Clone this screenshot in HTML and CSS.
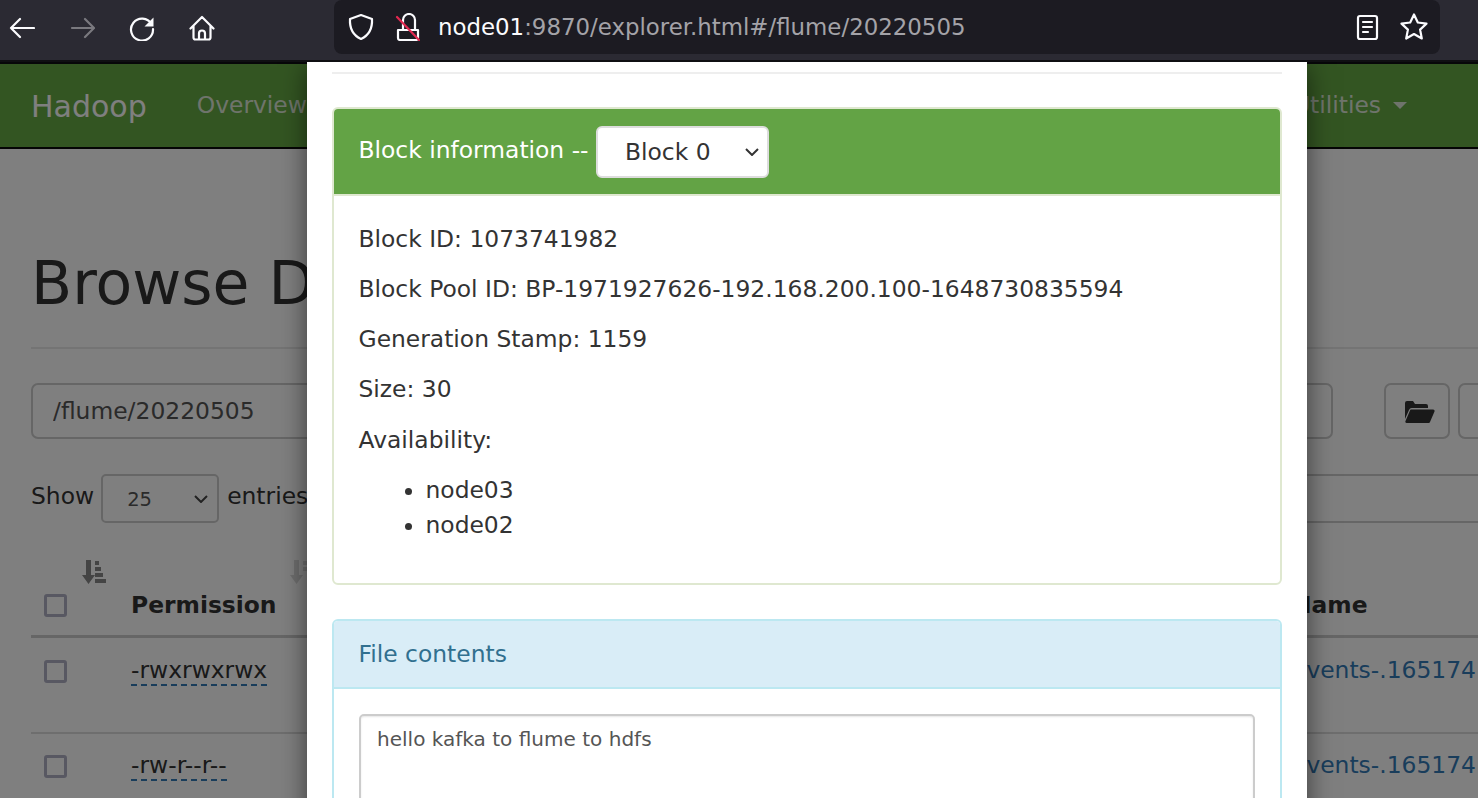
FILE: index.html
```html
<!DOCTYPE html>
<html lang="en">
<head>
<meta charset="utf-8">
<title>Browsing HDFS</title>
<link rel="stylesheet" href="styles.css">
</head>
<body>
<header class="toolbar">
  <div class="tool-buttons">
    <svg class="tool-icon" viewBox="0 0 26 26"><path d="M25 13H2M11 4l-9 9 9 9"/></svg>
    <svg class="tool-icon tool-icon-off" viewBox="0 0 26 26"><path d="M3 13h22M16 4l9 9-9 9"/></svg>
    <svg class="tool-icon" viewBox="0 0 26 26"><path d="M22.500 9A11 11 0 1 0 24 14"/><path class="solid" d="M24.500 2.500v9h-9z"/></svg>
    <svg class="tool-icon" viewBox="0 0 26 26"><path d="M1.500 13.500 13 2l11.500 11.500M4.500 11v11.500a2 2 0 0 0 2 2h13a2 2 0 0 0 2-2V11M10 24.500v-6a3 3 0 0 1 6 0v6"/></svg>
  </div>
  <div class="urlbar">
    <svg class="url-icon" viewBox="0 0 26 28"><path d="M13 2 24 6c.5 9-2.500 16-11 20C4.500 22 1.500 15 2 6z"/></svg>
    <svg class="url-icon" viewBox="0 0 26 28"><path d="M9 17V7a6 6 0 0 1 12 0v10M4 17h20v8a2 2 0 0 1-2 2H6a2 2 0 0 1-2-2z"/><path class="slash" d="M3 4l22 23"/></svg>
    <span class="url-text"><span class="url-host">node01</span>:9870/explorer.html#/flume/20220505</span>
    <svg class="url-icon url-reader" viewBox="0 0 26 28"><rect x="4" y="3" width="19" height="23" rx="2"/><path d="M9 9h9M9 14h9M9 19h5"/></svg>
    <svg class="url-icon url-star" viewBox="0 0 28 28"><path d="M14 1.500l3.800 8 8.700 1.100-6.400 6 1.700 8.900L14 21l-7.800 4.500 1.700-8.900-6.400-6 8.700-1.100z"/></svg>
  </div>
</header>

<div class="viewport">
  <nav class="navbar">
    <a class="brand">Hadoop</a>
    <a class="nav-link">Overview</a>
    <a class="nav-link nav-utilities">Utilities<span class="caret"></span></a>
  </nav>

  <main class="container">
    <h1 class="page-title">Browse Directory</h1>
    <div class="path-row">
      <input class="path-input" value="/flume/20220505" readonly>
      <button class="icon-button" type="button">
        <svg class="folder" viewBox="0 0 30 23"><path d="M0 19V3a2 2 0 0 1 2-2h6l2 3h11a2 2 0 0 1 2 2v2H7a3 3 0 0 0-3 2zM6 9.500h22a1.500 1.500 0 0 1 1.500 2L25 22a1.500 1.500 0 0 1-1.500 1H1.500C.5 23 0 22 .5 21L5 10.500a1.500 1.500 0 0 1 1-1z"/></svg>
      </button>
      <button class="icon-button" type="button"></button>
    </div>
    <div class="table-controls">
      <label class="length-label"><span class="length-text">Show</span><select class="length-select"><option>25</option></select><span class="length-text">entries</span></label>
      <input class="search-input" readonly>
    </div>
    <table class="file-table">
      <colgroup><col class="col-check"><col class="col-perm"><col class="col-name"></colgroup>
      <thead>
        <tr>
          <th>
            <svg class="sort-icon sort-check" viewBox="0 0 27 24"><path d="M7 0h5v15h4l-6.500 9L3 15h4zM16 1h4v4h-4zM16 7h6v4h-6zM16 13h8v4h-8zM16 19h11v4H16z"/></svg>
            <input class="check" type="checkbox">
          </th>
          <th>
            <svg class="sort-icon sort-perm" viewBox="0 0 27 24"><path d="M7 0h5v15h4l-6.500 9L3 15h4zM16 1h4v4h-4zM16 7h6v4h-6z"/></svg>
            Permission
          </th>
          <th class="name-head">Name</th>
        </tr>
      </thead>
      <tbody>
        <tr>
          <td><input class="check" type="checkbox"></td>
          <td><span class="perm">-rwxrwxrwx</span></td>
          <td><a class="file-link">events-.1651741234</a></td>
        </tr>
        <tr>
          <td><input class="check" type="checkbox"></td>
          <td><span class="perm">-rw-r--r--</span></td>
          <td><a class="file-link">events-.1651741235</a></td>
        </tr>
      </tbody>
    </table>
  </main>

  <div class="backdrop"></div>

  <section class="modal">
    <hr class="modal-rule">
    <div class="panel panel-success">
      <div class="panel-heading">
        <span class="heading-label">Block information --</span>
        <select class="block-select"><option>Block 0</option></select>
      </div>
      <div class="panel-body">
        <p>Block ID: 1073741982</p>
        <p>Block Pool ID: BP-1971927626-192.168.200.100-1648730835594</p>
        <p>Generation Stamp: 1159</p>
        <p>Size: 30</p>
        <p>Availability:</p>
        <ul>
          <li>node03</li>
          <li>node02</li>
        </ul>
      </div>
    </div>
    <div class="panel panel-info">
      <div class="panel-heading">File contents</div>
      <div class="panel-body">
        <textarea class="contents" readonly>hello kafka to flume to hdfs</textarea>
      </div>
    </div>
  </section>
</div>
</body>
</html>
```
FILE: styles.css
```css
* { box-sizing: border-box; }
html, body { height: 100%; }
body {
  margin: 0;
  height: 798px;
  overflow: hidden;
  display: flex;
  flex-direction: column;
  font-family: "DejaVu Sans", sans-serif;
  font-size: 23.4px;
  line-height: 35px;
  color: #333;
  background: #fff;
}

/* browser chrome */
.toolbar {
  flex: none;
  height: 62px;
  display: flex;
  align-items: flex-start;
  background: #2b2a33;
  border-bottom: 2px solid #0f0f12;
  padding-left: 9px;
  color: #fbfbfe;
}
.tool-buttons { display: flex; gap: 34px; width: 325px; padding-top: 15px; }
.tool-icon {
  width: 26px;
  height: 26px;
  fill: none;
  stroke: #fbfbfe;
  stroke-width: 2.2;
  stroke-linecap: round;
  stroke-linejoin: round;
}
.tool-icon .solid { fill: #fbfbfe; stroke: none; }
.tool-icon-off { stroke: #7a797f; }
.urlbar {
  width: 1106px;
  height: 54px;
  background: #1c1b22;
  border-radius: 8px;
  display: flex;
  align-items: center;
  padding: 0 12px 0 14px;
}
.url-icon {
  flex: none;
  width: 26px;
  height: 28px;
  fill: none;
  stroke: #fbfbfe;
  stroke-width: 2.2;
  stroke-linecap: round;
  stroke-linejoin: round;
  margin-right: 20px;
}
.url-icon .slash { stroke: #e22850; }
.url-text { flex: 1; font-size: 22.87px; color: #a4a3a8; margin-left: -2px; }
.url-host { color: #fbfbfe; }
.url-star { margin-right: 0; width: 28px; }

/* page beneath the dialog */
.viewport { position: relative; flex: 1; overflow: hidden; }
.navbar {
  height: 87px;
  display: flex;
  align-items: center;
  background: #66aa44;
  border-top: 2px solid #0f0f12;
  border-bottom: 2px solid #0a0a0a;
  padding: 0 71px 0 31px;
}
.brand { font-size: 30px; color: #fff; margin-right: 50px; padding-top: 1px; }
.nav-link { color: #dfe8d8; }
.nav-utilities { margin-left: auto; display: flex; align-items: center; }
.caret {
  width: 0;
  height: 0;
  margin-left: 12px;
  border-left: 7px solid transparent;
  border-right: 7px solid transparent;
  border-top: 7px solid #dfe8d8;
}
.container { padding: 0 0 0 31px; }
.page-title {
  margin: 0;
  height: 200px;
  padding-top: 99px;
  font-size: 60px;
  line-height: 70px;
  font-weight: 400;
  color: #333;
  border-bottom: 2px solid #e8e8e8;
}
.path-row { display: flex; align-items: flex-start; margin-top: 34px; gap: 8px; }
.path-input {
  width: 1302px;
  height: 56px;
  flex: none;
  margin-right: 43px;
  padding: 0 20px;
  font: inherit;
  color: #555;
  background: #fff;
  border: 2px solid #ccc;
  border-radius: 7px;
}
.icon-button {
  flex: none;
  width: 66px;
  height: 56px;
  background: #fff;
  border: 2px solid #ccc;
  border-radius: 7px;
  padding: 0 0 0 5px;
  display: flex;
  align-items: center;
  justify-content: center;
}
.folder { width: 30px; height: 23px; fill: #333; }
.table-controls { display: flex; align-items: flex-start; margin-top: 35px; height: 49px; }
.length-label { display: flex; align-items: flex-start; gap: 7px; flex: none; }
.length-text { padding-top: 5px; }
.length-select {
  appearance: none;
  width: 118px;
  height: 49px;
  margin-right: 1px;
  padding: 2px 0 0 24px;
  font: inherit;
  font-size: 19.5px;
  color: #555;
  border: 2px solid #ccc;
  border-radius: 5px;
  background: #fff url("data:image/svg+xml,%3Csvg xmlns='http://www.w3.org/2000/svg' width='14' height='8'%3E%3Cpath d='M1 1l6 6 6-6' fill='none' stroke='%23444' stroke-width='2'/%3E%3C/svg%3E") no-repeat right 9px center;
}
.search-input {
  width: 900px;
  height: 49px;
  flex: none;
  margin-left: 400px;
  background: #fff;
  border: 2px solid #ccc;
  border-radius: 5px;
}
.file-table {
  table-layout: fixed;
  width: 1600px;
  margin-top: 32px;
  border-collapse: collapse;
}
.col-check { width: 100px; }
.col-perm { width: 1161px; }
.file-table th {
  height: 81px;
  padding: 0 0 12px;
  text-align: left;
  vertical-align: bottom;
  font-weight: 700;
  color: #333;
  border-bottom: 3px solid #ccc;
  position: relative;
}
.sort-icon { position: absolute; top: 5px; width: 27px; height: 24px; fill: #888; }
.sort-check { left: 48px; }
.sort-perm { left: 156px; fill: #ddd; }
.file-table td {
  height: 97px;
  padding: 15.5px 0 0;
  vertical-align: top;
  white-space: nowrap;
  overflow: hidden;
  border-bottom: 2px solid #ddd;
}
.file-table tbody tr:last-child td { padding-top: 14px; }
.check {
  appearance: none;
  display: block;
  width: 23px;
  height: 23px;
  margin: 7px 0 0 13px;
  background: #fff;
  border: 3px solid #b0b0c4;
  border-radius: 3px;
}
.file-table th .check { margin-bottom: 6px; }
.perm { border-bottom: 2px dashed #337ab7; }
.file-link { color: #337ab7; }

.backdrop { position: absolute; inset: 0; background: rgba(0, 0, 0, .5); }

/* dialog */
.modal {
  position: absolute;
  top: 0;
  left: 307px;
  width: 1000px;
  height: 1000px;
  padding: 10px 25px 0;
  background: #fff;
  box-shadow: 0 5px 25px rgba(0, 0, 0, .55);
}
.modal-rule { margin: 0 0 33px; border: 0; border-top: 2px solid #eee; }
.panel {
  margin-bottom: 34px;
  border: 2px solid #dfe8d0;
  border-radius: 6px;
  overflow: hidden;
}
.panel-heading { display: flex; align-items: center; padding: 0 24.5px; }
.panel-success .panel-heading {
  height: 85px;
  align-items: flex-start;
  padding-top: 17px;
  background: #63a345;
  color: #fff;
  gap: 7.5px;
}
.heading-label { margin-top: 6.5px; }
.panel-info { border-color: #bce8f1; }
.panel-info .panel-heading {
  height: 68px;
  background: #d9edf7;
  color: #31708f;
  border-bottom: 2px solid #bce8f1;
}
.panel-success .panel-body { padding: 25.5px 24.5px 25.2px; border-top: 2px solid #dfe8d0; }
.panel-info .panel-body { padding: 25px 25px 0; }
.panel-body p { margin: 0 0 15.3px; }
.panel-body ul { margin: 0 0 15.3px; padding-left: 67px; }
.block-select {
  appearance: none;
  width: 173px;
  height: 52px;
  padding: 0 0 0 27px;
  font: inherit;
  color: #333;
  border: 2px solid #ddd;
  border-radius: 6px;
  background: #fff url("data:image/svg+xml,%3Csvg xmlns='http://www.w3.org/2000/svg' width='14' height='8'%3E%3Cpath d='M1 1l6 6 6-6' fill='none' stroke='%23333' stroke-width='2'/%3E%3C/svg%3E") no-repeat right 8px center;
}
.contents {
  display: block;
  width: 896px;
  height: 220px;
  padding: 6px 16px;
  font: inherit;
  font-size: 20.05px;
  line-height: 35px;
  color: #555;
  resize: none;
  border: 2px solid #ccc;
  border-radius: 5px;
  box-shadow: inset 0 1px 2px rgba(0, 0, 0, .1);
}
```
